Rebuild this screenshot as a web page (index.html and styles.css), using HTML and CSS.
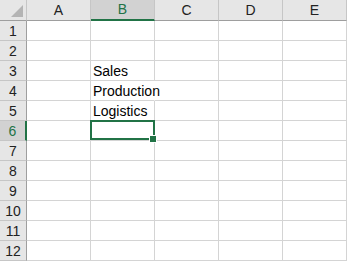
FILE: index.html
```html
<!DOCTYPE html>
<html lang="en">
<head>
    <meta charset="UTF-8">
    <title>Sheet1</title>
    <link rel="stylesheet" href="styles.css">
</head>
<body>
    <div class="sheet">
        <div class="corner"></div>
        <div class="col-head">A</div>
        <div class="col-head active">B</div>
        <div class="col-head">C</div>
        <div class="col-head">D</div>
        <div class="col-head">E</div>

        <div class="row-head">1</div>
        <div class="cell"></div><div class="cell"></div><div class="cell"></div><div class="cell"></div><div class="cell"></div>

        <div class="row-head">2</div>
        <div class="cell"></div><div class="cell"></div><div class="cell"></div><div class="cell"></div><div class="cell"></div>

        <div class="row-head">3</div>
        <div class="cell"></div><div class="cell">Sales</div><div class="cell"></div><div class="cell"></div><div class="cell"></div>

        <div class="row-head">4</div>
        <div class="cell"></div><div class="cell spill">Production</div><div class="cell"></div><div class="cell"></div><div class="cell"></div>

        <div class="row-head">5</div>
        <div class="cell"></div><div class="cell">Logistics</div><div class="cell"></div><div class="cell"></div><div class="cell"></div>

        <div class="row-head active">6</div>
        <div class="cell"></div>
        <div class="cell selected"><span class="handle"></span></div>
        <div class="cell"></div><div class="cell"></div><div class="cell"></div>

        <div class="row-head">7</div>
        <div class="cell"></div><div class="cell"></div><div class="cell"></div><div class="cell"></div><div class="cell"></div>

        <div class="row-head">8</div>
        <div class="cell"></div><div class="cell"></div><div class="cell"></div><div class="cell"></div><div class="cell"></div>

        <div class="row-head">9</div>
        <div class="cell"></div><div class="cell"></div><div class="cell"></div><div class="cell"></div><div class="cell"></div>

        <div class="row-head">10</div>
        <div class="cell"></div><div class="cell"></div><div class="cell"></div><div class="cell"></div><div class="cell"></div>

        <div class="row-head">11</div>
        <div class="cell"></div><div class="cell"></div><div class="cell"></div><div class="cell"></div><div class="cell"></div>

        <div class="row-head">12</div>
        <div class="cell"></div><div class="cell"></div><div class="cell"></div><div class="cell"></div><div class="cell"></div>
    </div>
</body>
</html>
```

FILE: styles.css
```css
body {
    margin: 0;
    background: #ffffff;
    font-family: "Liberation Sans", Arial, sans-serif;
}
.sheet {
    display: grid;
    grid-template-columns: 27px repeat(5, 64px);
    grid-template-rows: 21px repeat(12, 20px);
}
.corner {
    position: relative;
    background: #e6e6e6;
    border-right: 1px solid #c6c6c6;
    border-bottom: 1px solid #9e9e9e;
}
.corner::after {
    content: "";
    position: absolute;
    right: 3px;
    bottom: 3px;
    width: 0;
    height: 0;
    border-left: 12px solid transparent;
    border-bottom: 12px solid #b4b4b4;
}
.col-head {
    background: #e6e6e6;
    border-right: 1px solid #c6c6c6;
    border-bottom: 1px solid #9e9e9e;
    color: #222;
    font-size: 14px;
    line-height: 20px;
    text-align: center;
}
.col-head.active {
    background: #d2d2d2;
    color: #217346;
    border-bottom: 2px solid #217346;
    line-height: 19px;
}
.row-head {
    background: #e6e6e6;
    border-right: 1px solid #9e9e9e;
    border-bottom: 1px solid #c6c6c6;
    color: #222;
    font-size: 14px;
    line-height: 20px;
    text-align: center;
}
.row-head.active {
    background: #d2d2d2;
    color: #217346;
    border-right: 2px solid #217346;
}
.cell {
    position: relative;
    border-right: 1px solid #d4d4d4;
    border-bottom: 1px solid #d4d4d4;
    padding: 0 2px;
    font-size: 14px;
    line-height: 20px;
    color: #000;
    white-space: nowrap;
}
.cell.spill {
    border-right-color: transparent;
}
.cell.selected::before {
    content: "";
    position: absolute;
    top: -1px;
    left: -1px;
    right: -1px;
    bottom: 0;
    border: 2px solid #217346;
}
.handle {
    position: absolute;
    right: -3px;
    bottom: -3px;
    width: 6px;
    height: 6px;
    background: #217346;
    border: 1px solid #fff;
    z-index: 1;
}
```
